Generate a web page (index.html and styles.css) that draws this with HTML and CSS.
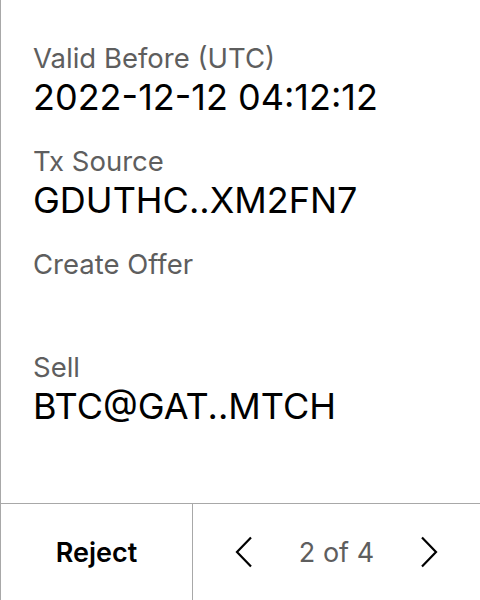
FILE: index.html
```html
<!DOCTYPE html>
<html>
<head>
<meta charset="utf-8">
<link rel="stylesheet" href="styles.css">
</head>
<body>
<div class="screen">
  <div class="details">
    <div class="row">
      <div class="label">Valid Before (UTC)</div>
      <div class="value">2022-12-12 04:12:12</div>
    </div>
    <div class="row">
      <div class="label">Tx Source</div>
      <div class="value">GDUTHC..XM2FN7</div>
    </div>
    <div class="row">
      <div class="label">Create Offer</div>
      <div class="value"></div>
    </div>
    <div class="row">
      <div class="label">Sell</div>
      <div class="value">BTC@GAT..MTCH</div>
    </div>
  </div>
  <div class="footer">
    <div class="reject">Reject</div>
    <div class="pager">
      <svg class="chev" viewBox="0 0 18 32" width="18" height="32"><path d="M16 1.5 L2 16 L16 30.5" fill="none" stroke="#000" stroke-width="2.2"/></svg>
      <span class="count">2 of 4</span>
      <svg class="chev" viewBox="0 0 18 32" width="18" height="32"><path d="M2 1.5 L16 16 L2 30.5" fill="none" stroke="#000" stroke-width="2.2"/></svg>
    </div>
  </div>
</div>
</body>
</html>
```
FILE: styles.css
```css
html, body {
  margin: 0;
  padding: 0;
  background: #fff;
}
body {
  font-family: Inter, "Noto Sans", sans-serif;
}
.screen {
  width: 480px;
  height: 600px;
  box-sizing: border-box;
  border-left: 1.5px solid #a8a8a8;
  display: flex;
  flex-direction: column;
}
.details {
  flex: 1;
  padding: 40px 0 0 32px;
}
.row {
  height: 103px;
}
.label {
  font-size: 27.5px;
  line-height: 36px;
  color: #5e5e5e;
}
.value {
  font-size: 36px;
  line-height: 42px;
  color: #000;
  min-height: 42px;
}
.footer {
  height: 96px;
  border-top: 1px solid #a8a8a8;
  display: flex;
}
.reject {
  width: 191px;
  border-right: 1px solid #a8a8a8;
  display: flex;
  align-items: center;
  justify-content: center;
  font-size: 27px;
  font-weight: 600;
  color: #000;
}
.pager {
  flex: 1;
  display: flex;
  align-items: center;
  justify-content: space-between;
  padding: 0 42px 0 42px;
}
.count {
  font-size: 27px;
  color: #5e5e5e;
}
.chev {
  display: block;
}
```
